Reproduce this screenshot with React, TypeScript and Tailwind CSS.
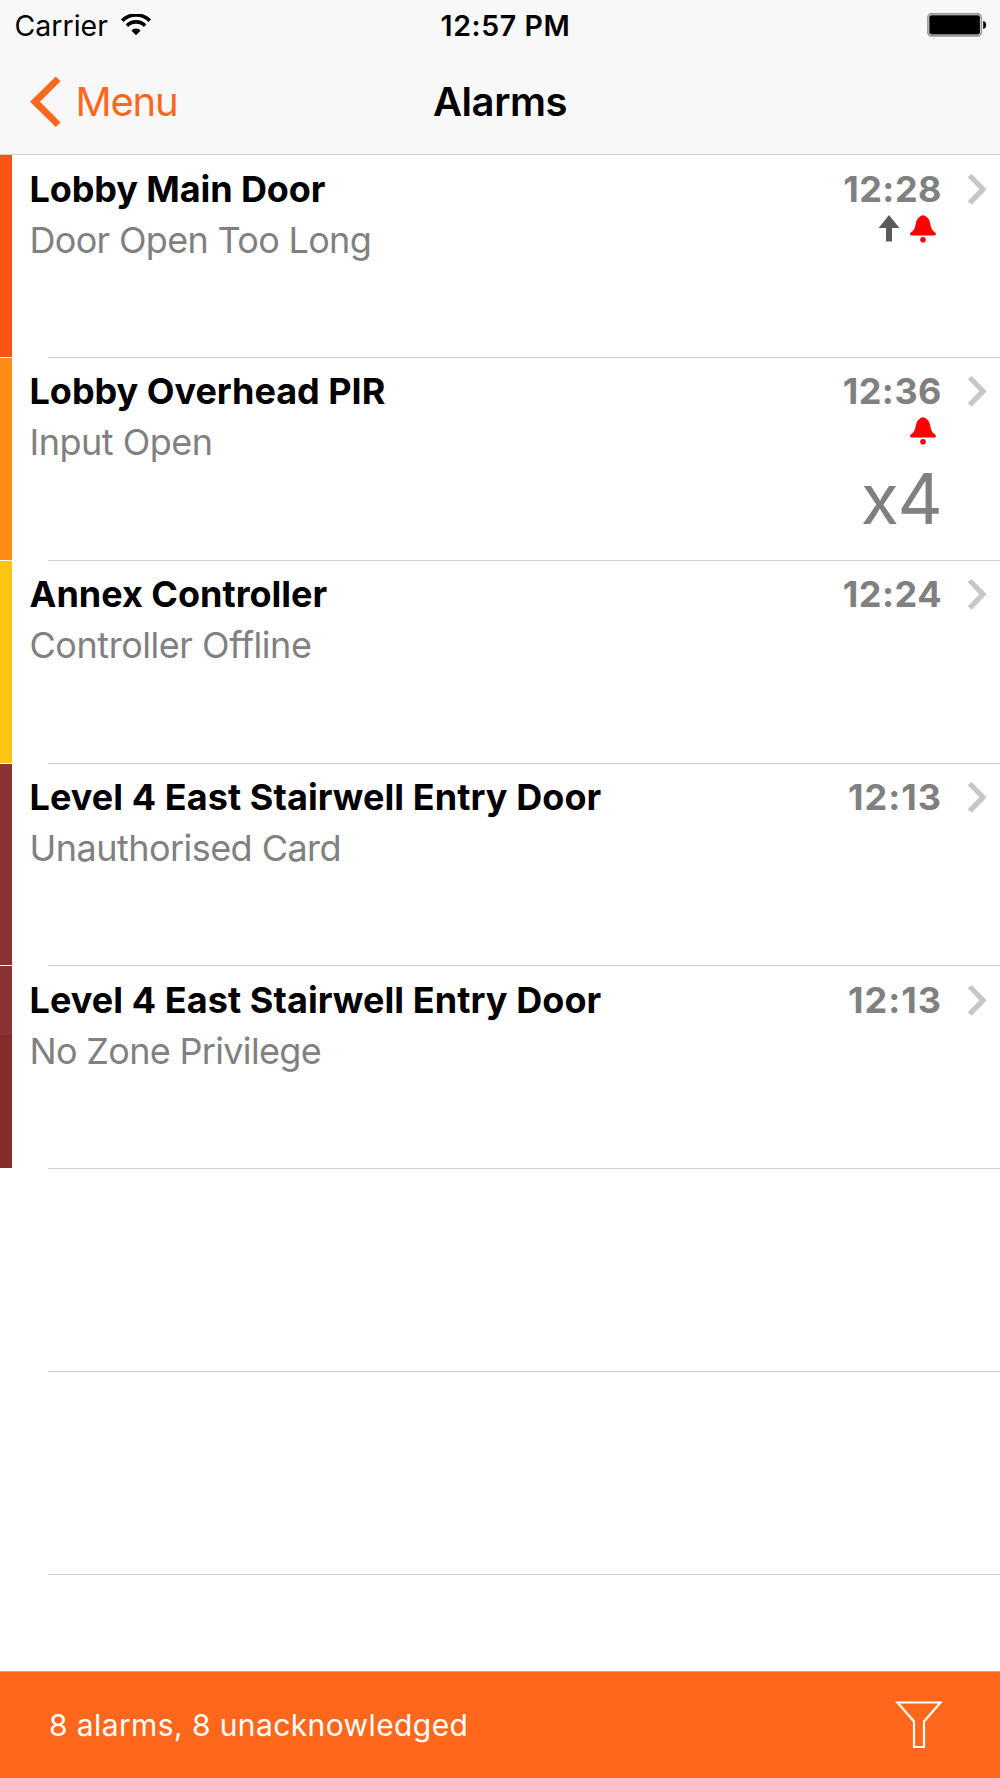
import React from "react";

type Alarm = {
  title: string;
  titleTracking: string;
  detail: string;
  detailTracking: string;
  time: string;
  timeTracking: string;
  stripe: string;
  escalated?: boolean;
  active?: boolean;
  count?: string;
};

const alarms: Alarm[] = [
  {
    title: "Lobby Main Door",
    titleTracking: "tracking-[-0.1px]",
    detail: "Door Open Too Long",
    detailTracking: "tracking-[-0.68px]",
    time: "12:28",
    timeTracking: "tracking-[0.5px]",
    stripe: "bg-[#ff5216]",
    escalated: true,
    active: true,
  },
  {
    title: "Lobby Overhead PIR",
    titleTracking: "tracking-[-0.02px]",
    detail: "Input Open",
    detailTracking: "tracking-[-0.5px]",
    time: "12:36",
    timeTracking: "tracking-[0.5px]",
    stripe: "bg-[#ff8b17]",
    active: true,
    count: "x4",
  },
  {
    title: "Annex Controller",
    titleTracking: "tracking-[0px]",
    detail: "Controller Offline",
    detailTracking: "tracking-[-0.45px]",
    time: "12:24",
    timeTracking: "tracking-[0.5px]",
    stripe: "bg-[#fec517]",
  },
  {
    title: "Level 4 East Stairwell Entry Door",
    titleTracking: "tracking-[0.08px]",
    detail: "Unauthorised Card",
    detailTracking: "tracking-[-0.54px]",
    time: "12:13",
    timeTracking: "tracking-[1px]",
    stripe: "bg-[#8b3232]",
  },
  {
    title: "Level 4 East Stairwell Entry Door",
    titleTracking: "tracking-[0.08px]",
    detail: "No Zone Privilege",
    detailTracking: "tracking-[-0.68px]",
    time: "12:13",
    timeTracking: "tracking-[1px]",
    stripe: "bg-linear-to-b from-[#8b3232] from-34% to-[#852b2b] to-34%",
  },
];

const WifiIcon = () => (
  <svg width="30" height="22" viewBox="0 0 30 22" fill="none" className="shrink-0">
    <path d="M1.2 6.6a19.6 19.6 0 0 1 27.6 0" stroke="#000" strokeWidth="3.6" />
    <path d="M5.9 11.6a13 13 0 0 1 18.2 0" stroke="#000" strokeWidth="3.6" />
    <path d="M10.3 16.4a6.8 6.8 0 0 1 9.4 0L15 21.3z" fill="#000" />
  </svg>
);

const BatteryIcon = () => (
  <svg width="60" height="24" viewBox="0 0 60 24" className="shrink-0">
    <rect x="0.9" y="0.9" width="53.4" height="22" rx="3.6" fill="#fff" stroke="#959595" strokeWidth="1.6" />
    <rect x="2.3" y="2.2" width="50.6" height="19.2" rx="2" fill="#000" />
    <path d="M56.2 8c2 .4 3 2 3 4s-1 3.6-3 4z" fill="#000" />
  </svg>
);

const BellIcon = () => (
  <svg width="26" height="28" viewBox="0 0 26 28" fill="#f00" className="shrink-0">
    <path d="M13 0.3C14.5 0.3 15.3 1.2 16.6 1.9C18.7 3.2 19.7 5.8 20.3 9C21 13 22.2 15.5 24.5 17C25.5 17.7 25.9 18.4 25.9 19.3C25.9 20.1 25.4 20.4 24.5 20.4H1.5C0.6 20.4 0.1 20.1 0.1 19.3C0.1 18.4 0.5 17.7 1.5 17C3.8 15.5 5 13 5.7 9C6.3 5.8 7.3 3.2 9.4 1.9C10.7 1.2 11.5 0.3 13 0.3Z" />
    <circle cx="13" cy="24.7" r="2.8" />
  </svg>
);

const ArrowUpIcon = () => (
  <svg width="22" height="28" viewBox="0 0 22 28" fill="#5a5a5a" className="shrink-0">
    <path d="M11 0L21.4 12.9H14V26.6H8V12.9H0.6Z" />
  </svg>
);

const ChevronIcon = () => (
  <svg width="20" height="32" viewBox="0 0 20 32" className="shrink-0">
    <path d="M0.7 4L4.7 0.9L19.7 16.3L4.7 31.7L0.7 28.2L12.3 16.3Z" fill="#c7c7c7" />
  </svg>
);

const BackIcon = () => (
  <svg width="31" height="52" viewBox="0 0 31 52" className="shrink-0">
    <path d="M0 25.8L25.8 0.5L30.6 5.2L10 25.8L30.6 46.4L25.8 51.1Z" fill="currentColor" />
  </svg>
);

const AlarmRow = ({ alarm }: { alarm: Alarm }) => (
  <li className="flex h-[202.85px] shrink-0">
    <div className={`mb-px w-3 shrink-0 ${alarm.stripe}`} />
    <div className="flex min-w-0 grow flex-col">
      <div className="flex grow justify-between pt-[8.6px] pl-[17.5px]">
        <div className="flex flex-col whitespace-nowrap">
          <h2 className={`text-[36px] leading-[51px] font-bold ${alarm.titleTracking}`}>{alarm.title}</h2>
          <p className={`text-[36px] leading-[51px] text-[#808080] ${alarm.detailTracking}`}>{alarm.detail}</p>
        </div>
        <div className="flex">
          <div className="flex flex-col items-end">
            <span className={`-mr-px text-[36px] leading-[51px] font-bold text-[#808080] ${alarm.timeTracking}`}>
              {alarm.time}
            </span>
            <div className="mr-[5.5px] flex h-[27.4px] gap-2.5">
              {alarm.escalated && <ArrowUpIcon />}
              {alarm.active && <BellIcon />}
            </div>
            {alarm.count && (
              <span className="text-[70px] leading-[107px] tracking-[-1.6px] text-[#808080]">{alarm.count}</span>
            )}
          </div>
          <div className="mr-[13px] ml-[26px] pt-[9px]">
            <ChevronIcon />
          </div>
        </div>
      </div>
      <div className="ml-9 h-px shrink-0 bg-[#d2d2d4]" />
    </div>
  </li>
);

const App = () => {
  return (
    <div className="flex h-[1778px] w-[1000px] flex-col overflow-hidden bg-white font-[Inter,'Liberation_Sans',sans-serif] text-black">
      <header className="flex h-[155px] shrink-0 flex-col border-b border-[#d2d2d2] bg-[#f8f8f8]">
        <div className="grid h-[50px] grid-cols-3 items-center">
          <div className="flex items-center gap-[13px] pl-[14.5px]">
            <span className="pt-[2px] text-[28.5px]">Carrier</span>
            <WifiIcon />
          </div>
          <span className="pt-[2px] pl-[11px] text-center text-[28.5px] font-semibold tracking-[0.6px]">12:57 PM</span>
          <div className="flex justify-end pr-[13px]">
            <BatteryIcon />
          </div>
        </div>
        <div className="grid h-[104px] grid-cols-3 items-center">
          <div className="flex items-center gap-[14.5px] pl-[30px] text-[#ff681c]">
            <BackIcon />
            <span className="text-[40px] tracking-[-1.2px]">Menu</span>
          </div>
          <h1 className="text-center text-[40px] font-semibold tracking-[-0.45px]">Alarms</h1>
        </div>
      </header>

      <ul className="flex min-h-0 grow flex-col overflow-hidden">
        {alarms.map((alarm, i) => (
          <AlarmRow key={i} alarm={alarm} />
        ))}
        {/* empty placeholder rows below the last alarm */}
        {[0, 1].map((i) => (
          <li key={i} className="ml-12 h-[202.85px] shrink-0 border-b border-[#d2d2d4]" />
        ))}
      </ul>

      <footer className="flex h-[107px] shrink-0 items-center justify-between border-t border-[#c9aa98] bg-[#ff681c] pr-[57px] pl-[49px] text-white">
        <span className="text-[30px] tracking-[0.4px]">8 alarms, 8 unacknowledged</span>
        <svg width="48" height="50" viewBox="0 0 48 50" fill="none">
          <path d="M2.5 2.5H45.5L29 21.5V47H19V21.5Z" stroke="#fff" strokeWidth="2.2" />
        </svg>
      </footer>
    </div>
  );
};

export default App;
